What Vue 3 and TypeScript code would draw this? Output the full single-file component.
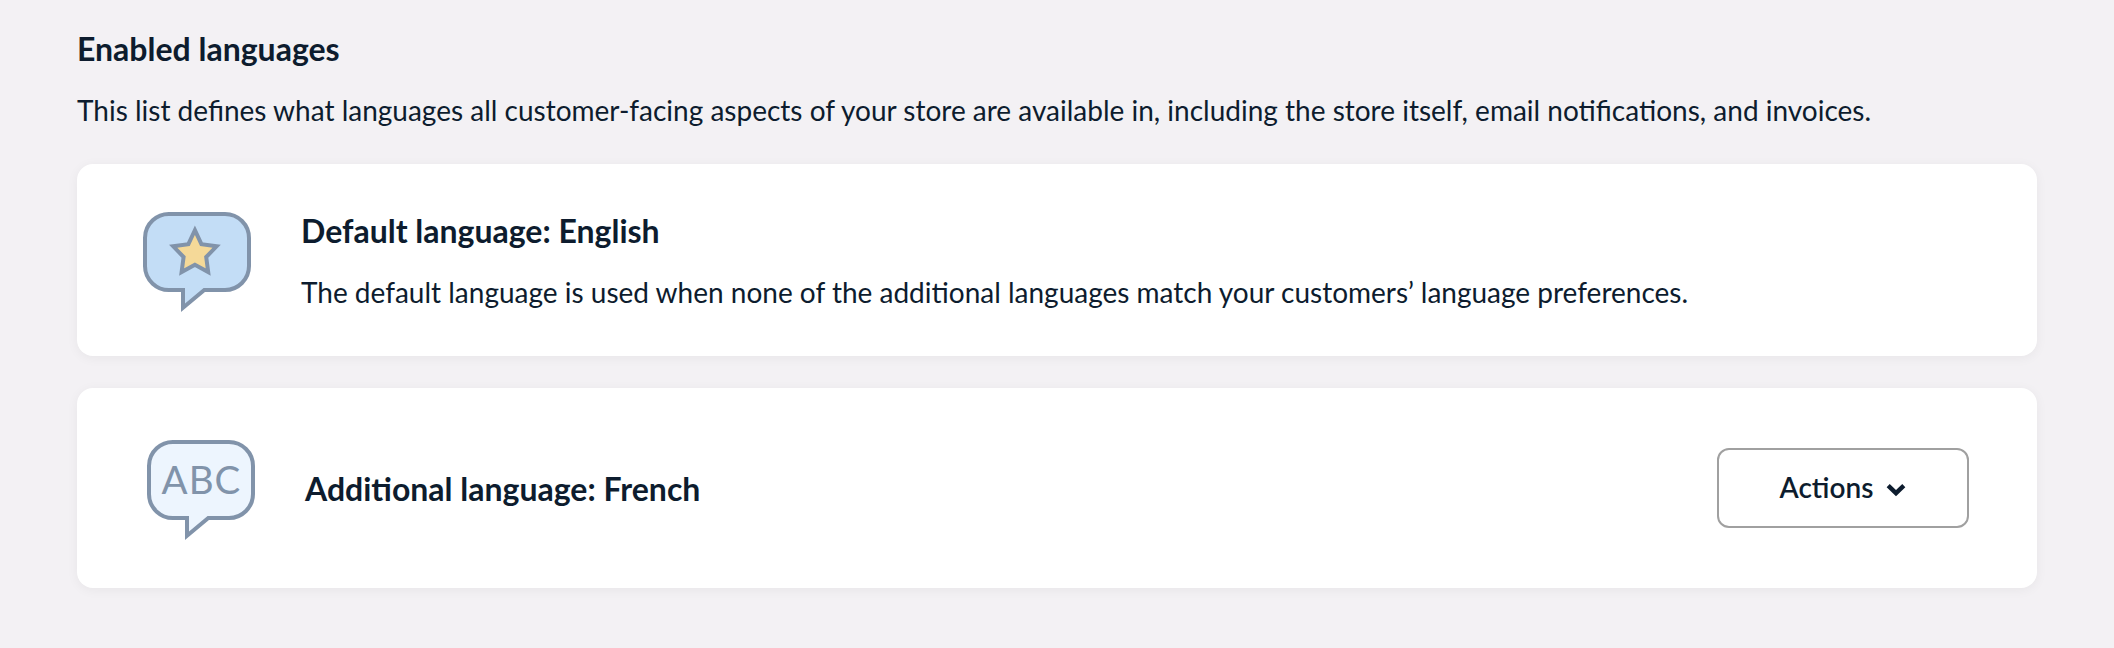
<script setup lang="ts">
const bubble =
  'M28 2H82A24 24 0 0 1 106 26V54A24 24 0 0 1 82 78H61.3L40 95.8V78H28A24 24 0 0 1 2 54V26A24 24 0 0 1 28 2Z'
const intro =
  'This list defines what languages all customer-facing aspects of your store are available in, including the store itself, email notifications, and invoices.'
const defaultNote =
  'The default language is used when none of the additional languages match your customers’ language preferences.'
</script>

<template>
  <main class="page">
    <h2 class="title">Enabled languages</h2>
    <p class="text">{{ intro }}</p>

    <section class="card card-default">
      <svg class="icon" width="108" height="102" viewBox="0 0 108 102">
        <path class="bubble bubble-blue" :d="bubble" />
        <path
          class="star"
          d="M51.9 18.2L58.4 32.2L73.6 34.3L63.2 45L65.2 60L51.9 52.8L38.6 60L40.6 45L30.2 34.3L45.4 32.2Z"
        />
      </svg>
      <div class="copy">
        <h3 class="title">Default language: English</h3>
        <p class="text">{{ defaultNote }}</p>
      </div>
    </section>

    <section class="card card-extra">
      <svg class="icon" width="108" height="102" viewBox="0 0 108 102">
        <path class="bubble bubble-pale" :d="bubble" />
        <text class="abc" x="14.6" y="54" textLength="78.6">ABC</text>
      </svg>
      <h3 class="title extra-title">Additional language: French</h3>
      <button class="actions" type="button">
        <span>Actions</span>
        <svg class="chevron" width="20" height="14" viewBox="0 0 20 14">
          <path d="M2.2 2.6L10 10.2L17.8 2.6" />
        </svg>
      </button>
    </section>
  </main>
</template>

<style>
body {
  margin: 0;
  background: #f3f1f4;
}
</style>

<style scoped>
.page {
  box-sizing: border-box;
  width: 2114px;
  height: 648px;
  padding: 29px 77px 0;
  background: #f3f1f4;
  color: #0d1c2e;
  font-family: Lato, 'Liberation Sans', sans-serif;
}
.title {
  margin: 0;
  font-size: 32px;
  font-weight: 700;
  line-height: 40px;
  white-space: nowrap;
}
.text {
  margin: 21px 0 0;
  font-size: 28px;
  line-height: 40px;
  white-space: nowrap;
}
.card {
  box-sizing: border-box;
  display: flex;
  width: 1960px;
  border-radius: 16px;
  background: #fff;
  box-shadow: 0 2px 12px rgba(0, 0, 0, 0.05);
}
.card-default {
  height: 192px;
  margin-top: 34px;
  padding: 48px 66px 0;
}
.card-extra {
  height: 200px;
  margin-top: 32px;
  padding: 52px 68px 0 70px;
}
.icon {
  flex: none;
  overflow: visible;
}
.copy {
  margin: -1px 0 0 50px;
}
.extra-title {
  margin: 29px auto 0 50px;
}
.bubble,
.star {
  stroke: #8193aa;
  stroke-width: 4;
}
.bubble-blue {
  fill: #c3ddf6;
}
.bubble-pale {
  fill: #edf5fe;
}
.star {
  fill: #f5d998;
}
.abc {
  fill: #8193aa;
  font-size: 38.5px;
}
.actions {
  box-sizing: border-box;
  display: flex;
  align-items: center;
  justify-content: center;
  gap: 13px;
  width: 252px;
  height: 80px;
  margin-top: 8px;
  padding: 0 0 2px;
  border: 2px solid #a0a0a0;
  border-radius: 12px;
  background: #fff;
  color: inherit;
  font-family: Lato, 'Liberation Sans', sans-serif;
  font-size: 28px;
  font-weight: 600;
  line-height: 40px;
}
.actions span {
  font-family: 'Lato Semibold', Lato, sans-serif;
}
.chevron {
  margin-top: 5px;
}
.chevron path {
  fill: none;
  stroke: #0d1c2e;
  stroke-width: 4.4;
}
</style>
